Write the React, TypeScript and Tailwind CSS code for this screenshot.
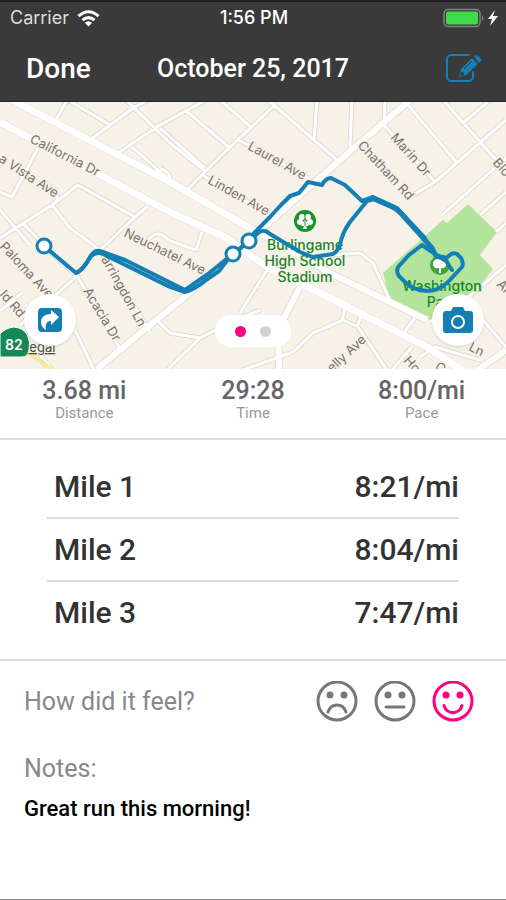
import { useState } from "react";

type Split = { label: string; pace: string };
type Mood = "bad" | "ok" | "good";

const stats = [
    { value: "3.68 mi", label: "Distance" },
    { value: "29:28", label: "Time" },
    { value: "8:00/mi", label: "Pace" },
];

const splits: Split[] = [
    { label: "Mile 1", pace: "8:21/mi" },
    { label: "Mile 2", pace: "8:04/mi" },
    { label: "Mile 3", pace: "7:47/mi" },
];

const moods: { id: Mood; label: string; mouth: string }[] = [
    { id: "bad", label: "Bad", mouth: "M12 31c3-9.500 15-9.500 18 0" },
    { id: "ok", label: "Okay", mouth: "M12 26h18" },
    { id: "good", label: "Good", mouth: "M12 24.500c2.500 9.500 15.500 9.500 18 0" },
];

const smallRoads = [
    "M67 100 55 122", "M68 100 110 125", "M148 100 133 108 90 140", "M206 100 160 125 118 153",
    "M126 100 170 143 205 171", "M132 147 167 178", "M160 168q12 6 10 13",
    "M38 148 12 197 0 192", "M0 238 52 205 78 185 135 217", "M147 207 135 217 100 250",
    "M40 180 55 190 58 200", "M52 205 70 228 100 250 150 332", "M23 223 50 252 77 276 122 352",
    "M77 276 58 293 20 325", "M0 210 30 245", "M0 311 22 293", "M75 330 94 370",
    "M157 320 170 333 200 338 225 325 260 310", "M200 338 167 370", "M148 240q10-12 20 0l28 10 6-18",
    "M185 110 230 148", "M160 128 205 168", "M220 100 252 128", "M276 104 227 150 187 190",
    "M268 100 337 160", "M317 100 314 140", "M239 140 308 178", "M202 175 270 215",
    "M352 100 350 147", "M385 100 384 125 435 182", "M408 105 457 163", "M443 100 506 171",
    "M490 100 463 123", "M506 120 435 182 410 197", "M506 158 442 215", "M506 192 480 215",
    "M506 223 496 232", "M267 270 240 313", "M243 370 293 352 313 333 343 320 358 327 387 370",
    "M345 308 342 321", "M361 316 357 327", "M330 255 360 253 373 263 390 301",
    "M415 318 402 335", "M412 347 392 370", "M506 265 463 302 430 322", "M483 320 506 347",
    "M420 357 435 347 480 360", "M36 350 52 369",
];

const streets = [
    { name: "California Dr", x: 29, y: 142, angle: 27 },
    { name: "a Vista Ave", x: -2, y: 161, angle: 33 },
    { name: "Laurel Ave", x: 247, y: 149, angle: 29 },
    { name: "Linden Ave", x: 207, y: 183, angle: 29 },
    { name: "Marin Dr", x: 390, y: 138, angle: 48 },
    { name: "Chatham Rd", x: 357, y: 146, angle: 47 },
    { name: "Blo", x: 492, y: 163, angle: 48 },
    { name: "Neuchatel Ave", x: 123, y: 236, angle: 26 },
    { name: "Paloma Ave", x: -1, y: 247, angle: 47 },
    { name: "arringdon Ln", x: 101, y: 259, angle: 61 },
    { name: "Acacia Dr", x: 83, y: 291, angle: 59 },
    { name: "ld Rd", x: -1, y: 295, angle: 49 },
    { name: "elly Ave", x: 332, y: 373, angle: -43 },
    { name: "Al", x: 496, y: 285, angle: 45 },
    { name: "Ln", x: 468, y: 350, angle: 26 },
    { name: "Ho", x: 403, y: 361, angle: 48 },
    { name: "Ca", x: 434, y: 369, angle: 32 },
];

function StatusBar() {
    return (
        <div className="grid h-8 grid-cols-3 items-center border-t-2 border-[#202020] pl-[10px] pr-2 font-[Inter,sans-serif] text-lg leading-8 text-white">
            <div className="flex items-center gap-2 text-[#dedede]">
                <span>Carrier</span>
                <svg width="24" height="17" viewBox="0 0 24 17" fill="none" stroke="white" strokeWidth="3" aria-hidden="true">
                    <path d="M1.500 6.200Q11.500-2.800 21.500 6.200M5.500 10.200Q11.500 5 17.500 10.200" />
                    <path d="m7.800 12.800q3.700-3 7.400 0L11.500 16.500Z" fill="white" stroke="none" />
                </svg>
            </div>
            <time className="text-center font-medium">1:56 PM</time>
            <svg className="justify-self-end" width="56" height="20" viewBox="0 0 56 20" aria-label="Battery charging">
                <rect x="2" y="1.500" width="36" height="17" rx="4" fill="none" stroke="#858585" strokeWidth="1.500" />
                <rect x="4" y="3.500" width="32" height="13" rx="2" fill="#3ddc4d" />
                <path d="M40 7q3 3 0 6Z" fill="#858585" />
                <path d="m53 2-7 9h4l-2 7 8-10h-5Z" fill="white" />
            </svg>
        </div>
    );
}

function RouteMap() {
    return (
        <svg className="block h-[267px] w-full" viewBox="0 102 506 267" preserveAspectRatio="xMidYMid slice" role="img" aria-label="Map of the run">
            <rect y="102" width="506" height="267" fill="#f7f2e8" />
            <path d="m468 204 29 28-17 23 13 14-46 59-57-27-7-28 60-53 4 3Z" fill="#b3e49b" />
            <g fill="none" strokeLinejoin="round">
                <path d={smallRoads.join("")} stroke="#dedad3" strokeWidth="5" />
                <path d="M0 122 170 212 227 238 267 267 340 303 427 347 465 372M12 100 170 182 250 228 330 273 427 320M410 100 340 160 257 233 187 295 160 317 97 369M300 287 278 330 279 370M506 350 478 370" stroke="#e3dfd8" strokeWidth="8" />
                <path d={smallRoads.join("")} stroke="white" strokeWidth="3" />
                <path d="M0 122 170 212 227 238 267 267 340 303 427 347 465 372M12 100 170 182 250 228" stroke="white" strokeWidth="7" />
                <path d="M250 228 330 273 427 320M410 100 340 160 257 233 187 295 160 317 97 369M300 287 278 330 279 370M506 350 478 370" stroke="white" strokeWidth="6" />
                <path d="m28 352 24 18" stroke="#f8e9a0" strokeWidth="5" />
            </g>
            <g fontFamily="Inter, sans-serif" fontSize="13" fill="#77736f" stroke="#f7f2e8" strokeWidth="3" paintOrder="stroke" strokeLinejoin="round">
                {streets.map((s) => (
                    <text key={s.name} transform={`translate(${s.x} ${s.y}) rotate(${s.angle})`}>{s.name}</text>
                ))}
            </g>

            <circle cx="305" cy="221" r="11" fill="#17942a" />
            <g fill="white">
                <circle cx="302" cy="217" r="3" />
                <circle cx="308" cy="217" r="3" />
                <circle cx="300" cy="222" r="3" />
                <circle cx="310" cy="222" r="3" />
                <path d="m305 219-4 7h3l-1 3h4l-1-3h3Z" />
            </g>
            <path d="M305 214v12" stroke="#17942a" />
            <circle cx="440" cy="265" r="10" fill="#43a638" />
            <path d="M439 273v-5q-6 1-6-4 0-5 6-5 7 0 7 5 0 5-5 4v5Z" fill="white" />
            <g fontFamily="Inter, sans-serif" fontSize="14" fontWeight="500" textAnchor="middle" fill="#19842a" stroke="#f7f2e8" strokeWidth="2" paintOrder="stroke">
                <text x="305" y="250">Burlingame</text>
                <text x="305" y="266">High School</text>
                <text x="305" y="282">Stadium</text>
                <g stroke="#b3e49b">
                    <text x="442" y="291">Washington</text>
                    <text x="442" y="307">Park</text>
                </g>
            </g>

            <g fill="none" stroke="#147fb5" strokeWidth="4" strokeLinejoin="round" strokeLinecap="round">
                <path d="M44 246 76 273Q83 270 89 259 94 249 100 251L125 260 185 290 208 274 233 254 249 241 254 233 270 217 281 205 290 196 299 193 308 182 322 185Q326 178 331 178L345 185 362 201 373 197 397 208 425 238" />
                <path d="M76 273Q83 270 91 256 96 251 103 254L168 286 185 292Q194 290 206 280L219 271 228 259 249 241 258 233Q264 228 270 234L280 240 300 252 313 257 333 254Q337 252 340 245 342 233 350 222L367 201 374 199 392 207 403 215 427 243" />
                <path d="M372 198 397 209 425 240 432 248 436 256 445 258" strokeWidth="5" />
                <path d="M422 245 409 255 398 267Q396 272 399 276L406 283Q413 290 427 291 438 291 447 283L462 267Q464 263 461 258L457 254Q453 252 450 255L445 259 438 256 422 245M438 256 446 261 452 270" />
            </g>
            <g fill="white" stroke="#147fb5" strokeWidth="3">
                <circle cx="44" cy="246" r="7" />
                <circle cx="233" cy="254" r="7" />
                <circle cx="249" cy="241" r="7" />
            </g>

            <text x="22" y="352" fontFamily="Inter, sans-serif" fontSize="13" fill="#4b4b4b" textDecoration="underline">Legal</text>
            <path d="M0 334Q5 328 14 327q9 1 13 7 4 8 2 16-1 7-7 7H0Z" fill="#168757" stroke="white" strokeWidth="1" />
            <text x="5" y="350" fontFamily="Inter, sans-serif" fontSize="14" fontWeight="600" fill="white">82</text>
        </svg>
    );
}

export default function App() {
    const [mood, setMood] = useState<Mood>("good");
    const [notes, setNotes] = useState("Great run this morning!");
    const [page, setPage] = useState(0);

    return (
        <div className="flex min-h-screen w-full flex-col border-b border-[#888] bg-white font-[Roboto,sans-serif]">
            <header className="border-b border-[#252525] bg-[#3a3a3a] text-white">
                <StatusBar />
                <div className="grid h-[69px] grid-cols-[1fr_auto_1fr] items-center px-6 pt-1 text-[28px] font-medium leading-8">
                    <button type="button" className="justify-self-start pl-[2px]">Done</button>
                    <h1 className="text-[25px]">October 25, 2017</h1>
                    <button type="button" aria-label="Edit run" className="justify-self-end">
                        <svg width="36" height="30" viewBox="0 0 36 30" aria-hidden="true">
                            <path d="M23 1H6Q1 1 1 6v16q0 5 5 5h16q5 0 5-5v-4" fill="none" stroke="#147fb5" strokeWidth="2" strokeLinecap="round" />
                            <path d="m26 4 6 6-12 11-6 2q-1 0-1-1l2-7Z" fill="#147fb5" />
                            <path d="m28 2 2-1q1 0 2 1l3 3q1 1 0 2l-2 2Z" fill="#147fb5" />
                            <path d="m18 15 8-8" stroke="#3a3a3a" strokeWidth="1" />
                            <circle cx="16" cy="20" r="2" fill="#3a3a3a" />
                        </svg>
                    </button>
                </div>
            </header>

            <section className="relative">
                <RouteMap />
                <button type="button" aria-label="Share run" className="absolute bottom-[23px] left-6 flex size-[52px] items-center justify-center rounded-full bg-white shadow-sm">
                    <svg width="26" height="26" viewBox="0 0 26 26" aria-hidden="true">
                        <rect x="1" y="1" width="24" height="24" rx="4" fill="#147fb5" />
                        <path d="M14 3v4C7 7 4 11 4 15c0 4 2 6 5 8-1-7 1-9 5-9v4l8-8Z" fill="white" />
                    </svg>
                </button>
                <div className="absolute inset-x-0 bottom-[22px] flex justify-center">
                    <div className="flex h-8 items-center gap-[14px] rounded-full bg-white px-5">
                        {[0, 1].map((i) => (
                            <button
                                key={i}
                                type="button"
                                aria-label={`Slide ${i + 1}`}
                                onClick={() => setPage(i)}
                                className={page === i ? "size-[11px] rounded-full bg-[#ff0080]" : "size-[11px] rounded-full bg-[#d3d3d3]"}
                            />
                        ))}
                    </div>
                </div>
                <button type="button" aria-label="Add photo" className="absolute bottom-[23px] right-[22px] flex size-[52px] items-center justify-center rounded-full bg-white shadow-sm">
                    <svg width="32" height="28" viewBox="0 0 32 28" aria-hidden="true">
                        <path d="M4 5h5l2-4h10l2 4h5q3 0 3 3v16q0 3-3 3H4q-3 0-3-3V8q0-3 3-3Z" fill="#147fb5" />
                        <circle cx="16" cy="16" r="6" fill="none" stroke="white" strokeWidth="2" />
                    </svg>
                </button>
            </section>

            <dl className="grid h-[71px] grid-cols-3 border-b-2 border-[#dcdcdc] pt-2 text-center">
                {stats.map((s) => (
                    <div key={s.label} className="flex flex-col-reverse justify-end">
                        <dt className="text-[15px] leading-4 text-[#999]">{s.label}</dt>
                        <dd className="text-[25px] font-medium leading-7 text-[#666]">{s.value}</dd>
                    </div>
                ))}
            </dl>

            <section className="border-b-2 border-[#dcdcdc] px-[47px] py-4">
                <table className="w-full text-[30px] font-medium leading-[61px] text-[#333]">
                    <tbody>
                        {splits.map((s) => (
                            <tr key={s.label} className="border-b-2 border-[#dcdcdc] last:border-b-0">
                                <th scope="row" className="pl-[7px] text-left font-medium">{s.label}</th>
                                <td className="text-right">{s.pace}</td>
                            </tr>
                        ))}
                    </tbody>
                </table>
            </section>

            <div role="radiogroup" aria-labelledby="feel" className="flex items-center justify-between px-6 pt-5">
                <span id="feel" className="text-[25px] leading-8 text-[#888]">How did it feel?</span>
                <div className="flex gap-4 pr-2">
                    {moods.map((m) => (
                        <label key={m.id} className="relative cursor-pointer text-[#777] has-checked:text-[#ff0080]">
                            <input
                                type="radio"
                                name="mood"
                                aria-label={m.label}
                                checked={mood === m.id}
                                onChange={() => setMood(m.id)}
                                className="absolute inset-0 size-full cursor-pointer appearance-none rounded-full"
                            />
                            <svg width="42" height="42" viewBox="0 0 42 42" fill="none" stroke="currentColor" strokeWidth="3" strokeLinecap="round" aria-hidden="true">
                                <circle cx="21" cy="20" r="19" />
                                <path d={m.mouth} />
                                <circle cx="14" cy="14" r="3.500" fill="currentColor" stroke="none" />
                                <circle cx="28" cy="14" r="3.500" fill="currentColor" stroke="none" />
                            </svg>
                        </label>
                    ))}
                </div>
            </div>

            <div className="flex grow flex-col px-6 pt-[30px]">
                <label htmlFor="notes" className="text-[25px] leading-8 text-[#888]">Notes:</label>
                <textarea
                    id="notes"
                    rows={2}
                    value={notes}
                    onChange={(e) => setNotes(e.target.value)}
                    className="mt-2 w-full resize-none text-[22px] font-medium leading-8 text-black outline-none"
                />
            </div>
        </div>
    );
}
